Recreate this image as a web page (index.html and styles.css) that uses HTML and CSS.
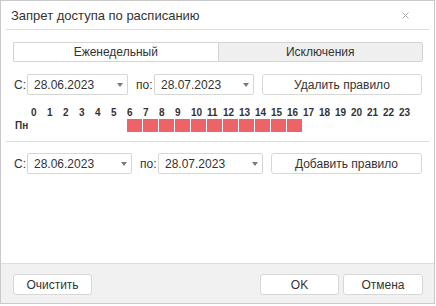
FILE: index.html
```html
<!DOCTYPE html>
<html lang="ru">
<head>
<meta charset="utf-8">
<title>Запрет доступа по расписанию</title>
<link rel="stylesheet" href="styles.css">
</head>
<body>
<div class="dialog">
  <div class="header">
    <span class="title">Запрет доступа по расписанию</span>
    <svg class="close" width="7" height="7" viewBox="0 0 7 7"><path d="M0.5 0.5L6.5 6.5M6.5 0.5L0.5 6.5" stroke="#a8a8a8" stroke-width="1"/></svg>
  </div>
  <div class="tabs">
    <div class="tab active">Еженедельный</div>
    <div class="tab">Исключения</div>
  </div>
  <div class="row">
    <span class="lbl lbl-from">С:</span>
    <div class="select w101"><span>28.06.2023</span><i class="arrow"></i></div>
    <span class="lbl lbl-to">по:</span>
    <div class="select w100"><span>28.07.2023</span><i class="arrow"></i></div>
    <button class="btn w160">Удалить правило</button>
  </div>
  <div class="schedule">
    <span></span>
    <span class="h">0</span><span class="h">1</span><span class="h">2</span><span class="h">3</span><span class="h">4</span><span class="h">5</span><span class="h">6</span><span class="h">7</span><span class="h">8</span><span class="h">9</span><span class="h">10</span><span class="h">11</span><span class="h">12</span><span class="h">13</span><span class="h">14</span><span class="h">15</span><span class="h">16</span><span class="h">17</span><span class="h">18</span><span class="h">19</span><span class="h">20</span><span class="h">21</span><span class="h">22</span><span class="h">23</span>
    <span class="day">Пн</span>
    <span class="c"></span><span class="c"></span><span class="c"></span><span class="c"></span><span class="c"></span><span class="c"></span>
    <span class="c on"></span><span class="c on"></span><span class="c on"></span><span class="c on"></span><span class="c on"></span><span class="c on"></span><span class="c on"></span><span class="c on"></span><span class="c on"></span><span class="c on"></span><span class="c on"></span>
    <span class="c"></span><span class="c"></span><span class="c"></span><span class="c"></span><span class="c"></span><span class="c"></span><span class="c"></span>
  </div>
  <div class="sep"></div>
  <div class="row row2">
    <span class="lbl lbl-from">С:</span>
    <div class="select w105"><span>28.06.2023</span><i class="arrow"></i></div>
    <span class="lbl lbl-to">по:</span>
    <div class="select w105"><span>28.07.2023</span><i class="arrow"></i></div>
    <button class="btn w151">Добавить правило</button>
  </div>
  <div class="spacer"></div>
  <div class="footer">
    <button class="btn fbtn">Очистить</button>
    <div class="fright">
      <button class="btn fbtn">OK</button>
      <button class="btn fbtn w80">Отмена</button>
    </div>
  </div>
</div>
</body>
</html>
```
FILE: styles.css
```css
html, body {
  margin: 0;
  padding: 0;
  background: #fff;
}
.dialog {
  width: 435px;
  height: 304px;
  box-sizing: border-box;
  border: 1px solid #c9c9c9;
  display: flex;
  flex-direction: column;
  font-family: "Liberation Sans", Arial, sans-serif;
  font-size: 12px;
  color: #333;
}
.header {
  margin: 0 5px;
  height: 28px;
  border-bottom: 1px solid #dedede;
  display: flex;
  align-items: center;
  justify-content: space-between;
  padding: 0 20px 0 5px;
}
.title {
  font-size: 13px;
  color: #333;
}
.close {
  display: block;
  margin-top: 1px;
}
.tabs {
  margin: 12px 11px 0 12px;
  display: flex;
  height: 20px;
}
.tab {
  flex: 1;
  box-sizing: border-box;
  border: 1px solid #d3d3d3;
  background: #efefef;
  display: flex;
  align-items: center;
  justify-content: center;
  color: #333;
}
.tab.active {
  background: #fff;
  border-right: none;
  border-radius: 2px 0 0 2px;
}
.tab:last-child {
  border-radius: 0 2px 2px 0;
}
.row {
  display: flex;
  align-items: center;
  margin: 12px 11px 0 12px;
  height: 21px;
}
.row2 {
  margin-top: 11px;
}
.lbl {
  color: #333;
}
.lbl-from {
  width: 14px;
  padding-left: 1px;
  box-sizing: border-box;
}
.lbl-to {
  margin: 0 0 0 8px;
  width: 18px;
}
.select {
  box-sizing: border-box;
  height: 21px;
  border: 1px solid #d6d6d6;
  border-radius: 2px;
  background: #fff;
  display: flex;
  align-items: center;
  justify-content: space-between;
  padding: 0 4px 0 6px;
}
.arrow {
  width: 0;
  height: 0;
  border-left: 3.5px solid transparent;
  border-right: 3.5px solid transparent;
  border-top: 4px solid #7a7a7a;
}
.w100 { width: 100px; }
.w101 { width: 101px; }
.w105 { width: 105px; }
.w160 { width: 160px; margin-left: 8px; }
.w151 { width: 151px; margin-left: 8px; }
.btn {
  box-sizing: border-box;
  height: 21px;
  border: 1px solid #d8d8d8;
  border-radius: 3px;
  background: #fff;
  font-family: "Liberation Sans", Arial, sans-serif;
  font-size: 12px;
  color: #333;
  padding: 0;
}
.schedule {
  margin: 12px 0 0 14px;
  display: grid;
  grid-template-columns: 15px repeat(24, 15px);
  grid-template-rows: 12px 13px;
  column-gap: 1px;
}
.h {
  font-size: 10px;
  font-weight: bold;
  line-height: 12px;
  color: #333;
  white-space: nowrap;
}
.day {
  font-size: 10px;
  font-weight: bold;
  line-height: 13px;
  color: #333;
}
.c.on {
  background: #ee6367;
}
.sep {
  margin: 9px 5px 0 5px;
  border-top: 1px solid #dedede;
}
.spacer {
  flex: 1;
}
.footer {
  border-top: 1px solid #dedede;
  background: #f1f1f1;
  height: 40px;
  box-sizing: border-box;
  padding: 10px 11px 0 12px;
  display: flex;
  justify-content: space-between;
  align-items: flex-start;
}
.fright {
  display: flex;
  gap: 4px;
}
.fbtn {
  width: 79px;
}
.fbtn.w80 {
  width: 80px;
}
```
